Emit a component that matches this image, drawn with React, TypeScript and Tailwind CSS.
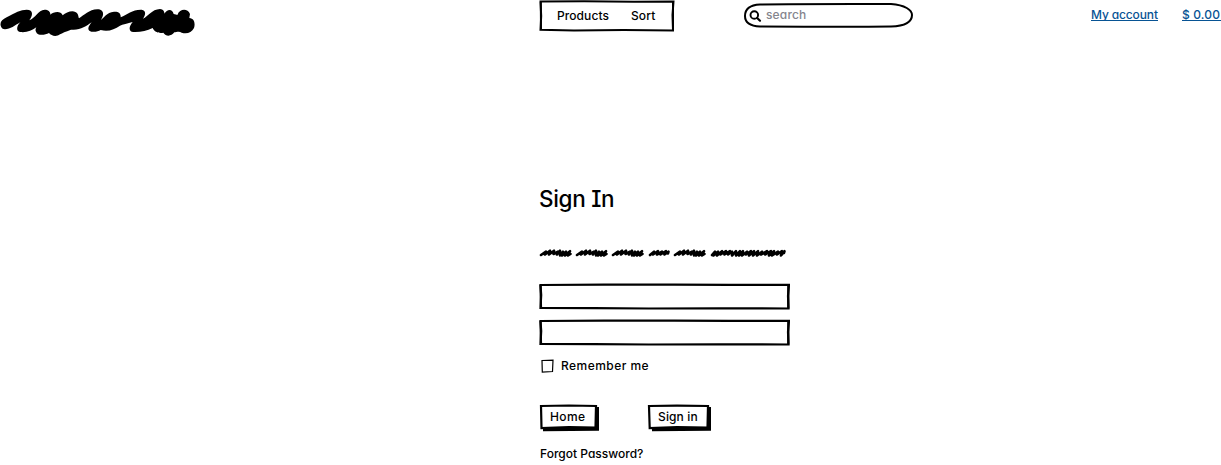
import React from 'react';

const LOGO =
  'M4 82 C-3 68 5 60 20 52 C45 38 62 29 80 29 C98 29 101 42 88 61 C106 54 114 31 134 29 C145 29 152 36 151 44 C160 36 182 31 188 46 C200 35 224 27 233 42 C236 48 235 52 237 55 C252 46 267 29 292 28 C310 28 315 42 302 60 C310 55 320 37 342 35 C357 34 363 41 362 52 C383 43 397 28 425 29 C438 31 438 43 429 56 C444 50 455 28 480 27 C491 28 494 37 493 41 C501 27 517 25 521 42 C526 42 530 45 532 45 C540 25 563 25 570 42 L568 54 C584 55 586 72 582 84 C575 98 560 103 545 98 C538 93 528 97 523 97 C513 110 498 110 490 98 C478 100 464 98 458 84 C440 92 422 97 400 96 C385 95 386 80 398 66 C383 70 367 74 360 77 C343 88 325 97 302 90 C293 96 276 98 268 92 C260 84 270 74 275 67 C258 79 240 92 213 89 C196 95 187 99 180 103 C169 111 154 108 147 99 C134 106 112 108 108 95 C105 91 107 86 109 82 C95 93 80 98 60 96 C47 92 50 78 61 67 C45 76 31 88 15 88 C9 88 6 86 4 82 Z';

const WORDS = [
  'M2 11 L7 7.700 L6 10.500 L11 6.700 L10 10.500 L15 6.700 L14.500 10 L19 7.700 L18 10.500 L21 6.700 L21 11.500 L24 7.700 L23 11.500 L27 7.700 L26 11.500 L31 7.200 L29 11.500 L31.500 10',
  'M38 11 L43 7.700 L42 10.500 L47 6.700 L46 10.500 L51 6.700 L50.500 10 L55 7.700 L54 10.500 L57 6.700 L57 11.500 L60 7.700 L59 11.500 L63 7.700 L62 11.500 L67 7.200 L65 11.500 L67.500 10',
  'M74 11 L79 7.700 L78 10.500 L83 6.700 L82 10.500 L87 6.700 L86.500 10 L91 7.700 L90 10.500 L93 6.700 L93 11.500 L96 7.700 L95 11.500 L99 7.700 L98 11.500 L103 7.200 L101 11.500 L103.500 10',
  'M111 11 L115 7.700 L114 10.500 L119 7.200 L118 10.500 L123 7.700 L121.500 10.500 L127 7.200 L125.500 10.500 L129.500 7.700 L129 9.500',
  'M136 11 L141 7.700 L140 10.500 L145 6.700 L144 10.500 L149 6.700 L148.500 10 L153 7.700 L152 10.500 L155 6.700 L155 11.500 L158 7.700 L157 11.500 L161 7.700 L160 11.500 L165 7.200 L163 11.500 L165.500 10',
  'M173 11 L176 7.700 L174.500 11.500 L179 7.700 L178 11.500 L183 7.200 L181.500 10.500 L187 7.200 L185.500 10.500 L191 7.200 L189 10.500 L193 7.700 L193 11.500 L197 7.200 L197 11.500 L201 7.200 L200 11.500 L204 7.200 L203 11.500 L208 7.700 L207 10.500 L212 7.200 L210 11.500 L215 7.200 L214 11.500 L219 7.200 L218 11.500 L223 7.700 L222 10.500 L228 7.200 L226 10.500 L232 7.200 L230 11.500 L235 7.200 L233 11.500 L239 7.700 L238 10.500 L243 7.200 L242 11.500 L245.500 7.200 L245 9',
];

function Field({ label }: { label: string }) {
  return (
    <div className="relative h-[27px] w-[251px]">
      <svg className="pointer-events-none absolute inset-0" width="251" height="27" viewBox="0 0 251 27" fill="none" stroke="black" aria-hidden="true">
        <path d="M1.500 2 L65 1.700 L135 1.600 L190 1.900 L250 1.800 L249 13 L249.500 25.500 L180 25.400 L110 25.500 L55 25.200 L1.500 24.800 L2.200 12 Z" strokeWidth="2.200" />
        <path d="M1.500 2 L2 24.500 M249.300 2 L249.300 25.500" strokeWidth="2.200" />
      </svg>
      <input aria-label={label} className="relative h-full w-full bg-transparent px-2 text-[12px] outline-none" />
    </div>
  );
}

function SketchButton({ children, wide = false }: { children: React.ReactNode; wide?: boolean }) {
  return (
    <button className={wide ? 'relative h-[28px] w-[64px]' : 'relative h-[28px] w-[60px]'}>
      <svg className="absolute inset-0 h-full w-full" viewBox={wide ? '0 0 64 28' : '0 0 60 28'} aria-hidden="true">
        <path d={wide ? 'M4 4 L64 3 L64 26.800 L5 27.300 Z' : 'M4 4 L60 3 L60 26.800 L4 27.300 Z'} fill="black" />
        <path d={wide ? 'M2 2 L30 1.700 L61 2 L60.500 23.500 L30 23.100 L2.700 24 Z' : 'M2 2 L30 1.500 L57 2 L56.500 23.500 L30 23.100 L2.500 24 Z'} fill="white" stroke="black" strokeWidth="2.200" />
      </svg>
      <span className={wide ? 'absolute left-[11px] top-[5px] whitespace-nowrap tracking-[0.13px]' : 'absolute left-[11px] top-[5px] whitespace-nowrap tracking-[0.4px]'}>{children}</span>
    </button>
  );
}

export default function App() {
  return (
    <div className="h-[465px] w-[1221px] overflow-hidden bg-white font-['Inter','Liberation_Sans',sans-serif] text-[12px] font-medium leading-[16px] text-black [font-feature-settings:'cv11','cv08']">
      <header className="flex h-[40px] items-start">
        <svg className="shrink-0" width="200" height="40" viewBox="0 0 600 120" fill="black" role="img" aria-label="Logo">
          <path d={LOGO} />
        </svg>
        <nav className="relative ml-[339px] flex h-[32px] w-[136px] shrink-0 gap-[22px] pl-[18px] pt-[8px]">
          <svg className="absolute inset-0" width="136" height="32" viewBox="0 0 136 32" fill="none" stroke="black" strokeWidth="2" aria-hidden="true">
            <path d="M1.500 1.500 L45 1.200 L95 1.700 L134.500 1.500 L133.500 15 L134 30.500 L85 30.100 L35 30.400 L1.500 29.800 L2.200 16 Z" />
            <path d="M1.800 2 L2 29 M134 2 L134 30" />
          </svg>
          <a className="relative w-[52px] tracking-[0.08px]">Products</a>
          <a className="relative tracking-[0.12px]">Sort</a>
        </nav>
        <div className="relative ml-[68px] h-[30px] w-[171px] shrink-0 pl-[23px] pt-[7px]">
          <svg className="absolute inset-0" width="171" height="30" viewBox="0 0 171 30" fill="none" stroke="black" aria-hidden="true">
            <path d="M17 4.500 C55 3.800 110 4 148 4 C162 5 169 10 169 15 C169 22 163 26 148 26.500 C110 27 55 26.700 17 26.500 C6 26 2 22 2 16 C2 9 7 5 17 4.500 Z" strokeWidth="2" />
            <circle cx="11.300" cy="15" r="3.800" strokeWidth="1.900" />
            <path d="M14.200 18 L17 20.700" strokeWidth="2.200" strokeLinecap="round" />
          </svg>
          <span className="relative tracking-[0.15px] text-[#85858d]">search</span>
        </div>
        <div className="ml-[177px] flex gap-[24px] whitespace-nowrap pt-[7px] text-[#075394]">
          <a className="h-[14px] w-[67px] border-b border-[#075394] tracking-[-0.13px]">My account</a>
          <a className="h-[14px] w-[39px] border-b border-[#075394] tracking-[0.15px]">$ 0.00</a>
        </div>
      </header>

      <main className="ml-[539px] w-[260px] pt-[143px]">
        <h1 className="h-[32px] whitespace-nowrap text-[22.500px] leading-[32px] tracking-[-0.3px]">Sign In</h1>
        <svg className="mt-[29px]" width="251" height="17" viewBox="0 0 251 17" fill="none" stroke="black" strokeWidth="2.600" strokeLinecap="round" strokeLinejoin="round" aria-hidden="true">
          {WORDS.map((d, i) => <path key={i} d={d} />)}
        </svg>
        <form className="mt-[22px]" onSubmit={(e) => e.preventDefault()}>
          <Field label="Email" />
          <div className="mt-[9px]"><Field label="Password" /></div>
          <label className="mt-[12px] flex h-[16px] items-start">
            <svg className="mt-[1px] shrink-0" width="22" height="14" viewBox="0 0 22 14" fill="none" stroke="black" strokeWidth="1.200" aria-hidden="true">
              <path d="M3 1.500 L14 1.200 L13.500 12.500 L3.300 13 Z" />
            </svg>
            <span className="whitespace-nowrap tracking-[0.45px]">Remember me</span>
          </label>
          <div className="mt-[30px] flex gap-[48px]">
            <SketchButton>Home</SketchButton>
            <SketchButton wide>Sign in</SketchButton>
          </div>
        </form>
        <a className="ml-[1px] mt-[14px] block whitespace-nowrap">Forgot Password?</a>
      </main>
    </div>
  );
}
